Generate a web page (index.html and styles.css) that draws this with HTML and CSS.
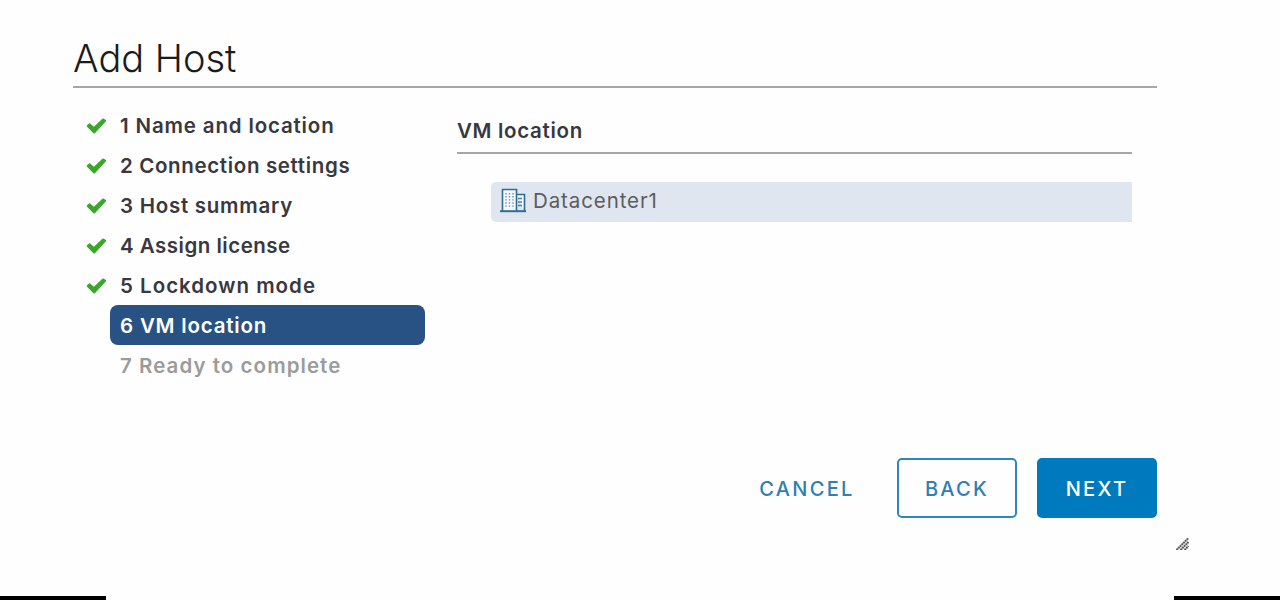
FILE: index.html
```html
<!DOCTYPE html>
<html lang="en">
<head>
<meta charset="utf-8">
<title>Add Host</title>
<link rel="stylesheet" href="styles.css">
</head>
<body>
<svg class="defs" width="0" height="0" aria-hidden="true">
  <symbol id="check" viewBox="0 0 20 16"><path d="M0.3 8.2Q0.3 7.6 0.8 7.1L2.5 5.5Q3.1 5 3.7 5.5L7.4 8.8L15.9 0.7Q16.5 0.2 17.1 0.5L19.3 1.9Q20 2.5 19.5 3.2L8.6 15Q7.6 15.8 6.6 14.9L0.8 9Q0.3 8.6 0.3 8.2Z"/></symbol>
</svg>
<div class="page">
  <main class="wizard">
    <h1 class="title">Add Host</h1>
    <div class="body">
      <ol class="steps">
        <li class="step s1"><svg class="check"><use href="#check"/></svg><span class="label">1 Name and location</span></li>
        <li class="step s2"><svg class="check"><use href="#check"/></svg><span class="label">2 Connection settings</span></li>
        <li class="step s3"><svg class="check"><use href="#check"/></svg><span class="label">3 Host summary</span></li>
        <li class="step s4"><svg class="check"><use href="#check"/></svg><span class="label">4 Assign license</span></li>
        <li class="step s5"><svg class="check"><use href="#check"/></svg><span class="label">5 Lockdown mode</span></li>
        <li class="step s6"><span class="label active">6 VM location</span></li>
        <li class="step s7"><span class="label pending">7 Ready to complete</span></li>
      </ol>
      <section class="content">
        <h2 class="heading">VM location</h2>
        <div class="row">
          <svg class="building" viewBox="0 0 26 25">
            <path class="wall" d="M2.5 23V1.5H16.5V23M16.5 6.5H24.5V23"/>
            <path class="base" d="M0 23.2H26"/>
            <path class="windows" d="M6 5V20M9.5 5V20M13 5V20"/>
            <path class="floors" d="M18 10.5H22M18 14H22M18 17.5H22"/>
          </svg>
          <span class="name">Datacenter1</span>
        </div>
      </section>
    </div>
    <footer class="actions">
      <button class="btn cancel">CANCEL</button>
      <button class="btn back">BACK</button>
      <button class="btn next">NEXT</button>
    </footer>
  </main>
  <svg class="grip" viewBox="0 0 13 12"><path d="M0.5 12L12.5 0M4.5 12L12.5 4M8.5 12L12.5 8"/></svg>
  <div class="edge"><i class="bar"></i><i class="bar"></i></div>
</div>
</body>
</html>
```
FILE: styles.css
```css
* { box-sizing: border-box; }
body { margin: 0; background: #fefefe; font-family: Inter, "Liberation Sans", sans-serif; }
.defs { display: block; height: 0; }
.page { height: 600px; display: flex; flex-direction: column; overflow: hidden; }
.wizard { width: 1084px; margin-left: 73px; padding-top: 34px; }
.title { margin: 0; height: 54px; line-height: 49px; font-size: 38px; font-weight: 300; color: #1b1b1b; border-bottom: 2px solid #a6a6a6; }
.body { display: flex; height: 370px; padding-top: 17px; }
.steps { width: 352px; margin: 0; padding: 0 0 0 13px; list-style: none; }
.step { display: flex; height: 40px; align-items: center; justify-content: flex-end; }
.check { width: 21px; height: 16px; margin-right: auto; fill: #3aa728; position: relative; top: 1px; }
.label { width: 315px; height: 40px; padding-left: 10px; line-height: 42px; font-size: 20.5px; font-weight: 600; color: #38383e; border-radius: 8px; white-space: nowrap; }
.s1 .label { letter-spacing: 0.84px; }
.s2 .label { letter-spacing: 0.65px; }
.s3 .label { letter-spacing: 0.74px; }
.s4 .label { letter-spacing: 0.5px; }
.s5 .label { letter-spacing: 1px; }
.s6 .label { letter-spacing: 0.8px; }
.s7 .label { letter-spacing: 1.05px; }
.label.active { background: #285283; color: #fff; }
.label.pending { color: #9b9b9b; }
.content { width: 675px; margin-left: 32px; padding-top: 5px; }
.heading { margin: 0; height: 44px; line-height: 42px; font-size: 20.5px; font-weight: 600; letter-spacing: 0.68px; color: #38383e; border-bottom: 2px solid #a6a6a6; }
.row { display: flex; align-items: center; height: 40px; margin: 28px 0 0 34px; padding: 0 0 3px 9px; gap: 7px; background: #dfe6ef; border-radius: 5px 0 0 5px; }
.building { width: 26px; height: 25px; fill: none; }
.wall { stroke: #316d93; stroke-width: 1.6; fill: #f5f8fb; }
.base { stroke: #316d93; stroke-width: 2; }
.windows { stroke: #6c92ae; stroke-width: 1.4; stroke-dasharray: 1.4 1.7; }
.floors { stroke: #4b81a5; stroke-width: 1.4; }
.name { font-size: 20.5px; letter-spacing: 0.9px; color: #5b5c60; }
.actions { display: flex; justify-content: flex-end; height: 60px; }
.btn { width: 120px; height: 60px; padding: 1px 0 0; border: 2px solid #2e86bd; border-radius: 5px; font: 500 20px Inter, sans-serif; letter-spacing: 2.3px; }
.cancel { border-color: transparent; background: none; color: #2e80b4; margin-right: 30px; }
.back { background: #fefefe; color: #2e80b4; margin-right: 20px; }
.next { background: #007abf; color: #fff; border-color: #007abf; }
.grip { width: 13px; height: 12px; margin: 20px 0 0 1176px; fill: none; stroke: #555; stroke-width: 2; stroke-dasharray: 1.9 0.5; }
.edge { display: flex; justify-content: space-between; margin-top: auto; height: 4px; }
.bar { width: 106px; height: 4px; background: #000; }
```
